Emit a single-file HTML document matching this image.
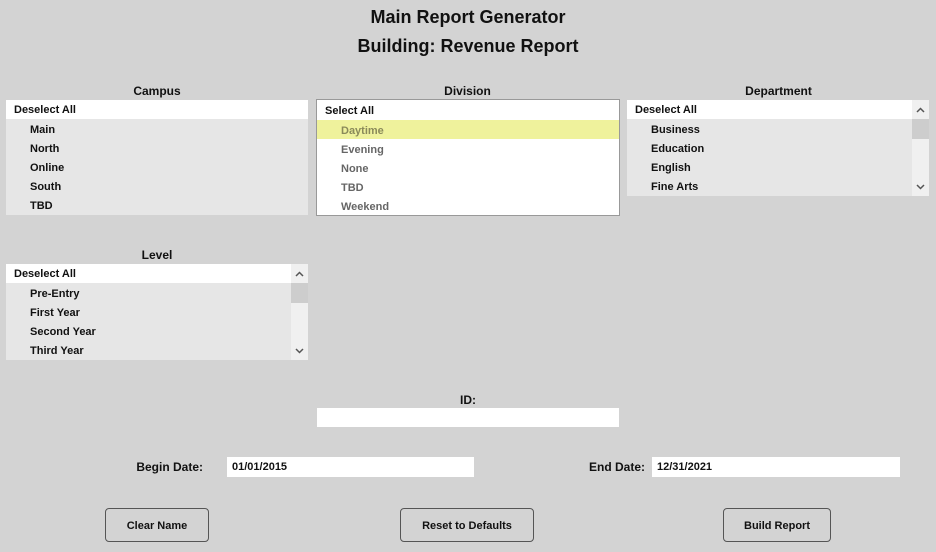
<!DOCTYPE html>
<html><head><style>
body{margin:0;width:936px;height:552px;background:#d3d3d3;font-family:"Liberation Sans",sans-serif;font-weight:bold;color:#111;position:relative;overflow:hidden}
.t{position:absolute;left:0;width:936px;text-align:center;font-size:18px}
.lbl{position:absolute;font-size:12px;text-align:center}
.box{position:absolute;background:#e6e6e6;font-size:11px}
.hd{height:19px;background:#fff;line-height:21px;padding-left:8px;overflow:visible}
.it{height:19px;line-height:23px;padding-left:24px;overflow:visible}
.sb{position:absolute;right:0;top:0;width:17px;bottom:0;background:#f0f0f0}
.th{position:absolute;left:0;width:17px;top:19px;height:20px;background:#cdcdcd}
.ar{position:absolute;left:4px;width:9px;height:6px}
.inp{position:absolute;background:#fff;font-size:11px;line-height:20px;padding-left:5px;box-sizing:border-box}
.btn{position:absolute;border:1px solid #555;border-radius:4px;font-size:11px;text-align:center;box-sizing:border-box;background:#d3d3d3}
</style></head><body>
<div class="t" style="top:7px">Main Report Generator</div>
<div class="t" style="top:36px">Building: Revenue Report</div>

<div class="lbl" style="left:6px;width:302px;top:84px">Campus</div>
<div class="box" style="left:6px;top:100px;width:302px;height:115px">
<div class="hd">Deselect All</div>
<div class="it">Main</div><div class="it">North</div><div class="it">Online</div><div class="it">South</div><div class="it">TBD</div>
</div>

<div class="lbl" style="left:316px;width:303px;top:84px">Division</div>
<div class="box" style="left:316px;top:99px;width:302px;height:115px;background:#fff;border:1px solid #999">
<div class="hd" style="height:20px;line-height:22px">Select All</div>
<div class="it" style="background:#eff29c;color:#8a8a5a">Daytime</div>
<div class="it" style="color:#666">Evening</div><div class="it" style="color:#666">None</div><div class="it" style="color:#666">TBD</div><div class="it" style="color:#666">Weekend</div>
</div>

<div class="lbl" style="left:627px;width:303px;top:84px">Department</div>
<div class="box" style="left:627px;top:100px;width:302px;height:96px">
<div class="hd">Deselect All</div>
<div class="it">Business</div><div class="it">Education</div><div class="it">English</div><div class="it">Fine Arts</div>
<div class="sb"><svg class="ar" style="top:7px" viewBox="0 0 9 6"><path d="M1 5L4.5 1.5L8 5" stroke="#555" stroke-width="1.5" fill="none"/></svg><div class="th"></div><svg class="ar" style="bottom:6px" viewBox="0 0 9 6"><path d="M1 1L4.5 4.5L8 1" stroke="#555" stroke-width="1.5" fill="none"/></svg></div>
</div>

<div class="lbl" style="left:6px;width:302px;top:248px">Level</div>
<div class="box" style="left:6px;top:264px;width:302px;height:96px">
<div class="hd">Deselect All</div>
<div class="it">Pre-Entry</div><div class="it">First Year</div><div class="it">Second Year</div><div class="it">Third Year</div>
<div class="sb"><svg class="ar" style="top:7px" viewBox="0 0 9 6"><path d="M1 5L4.5 1.5L8 5" stroke="#555" stroke-width="1.5" fill="none"/></svg><div class="th"></div><svg class="ar" style="bottom:6px" viewBox="0 0 9 6"><path d="M1 1L4.5 4.5L8 1" stroke="#555" stroke-width="1.5" fill="none"/></svg></div>
</div>

<div class="lbl" style="left:317px;width:302px;top:393px">ID:</div>
<div class="inp" style="left:317px;top:408px;width:302px;height:19px"></div>

<div class="lbl" style="left:118px;width:85px;top:460px;text-align:right">Begin Date:</div>
<div class="inp" style="left:227px;top:457px;width:247px;height:20px;line-height:21px">01/01/2015</div>
<div class="lbl" style="left:568px;width:77px;top:460px;text-align:right">End Date:</div>
<div class="inp" style="left:652px;top:457px;width:248px;height:20px;line-height:21px">12/31/2021</div>

<div class="btn" style="left:105px;top:508px;width:104px;height:34px;line-height:34px">Clear Name</div>
<div class="btn" style="left:400px;top:508px;width:134px;height:34px;line-height:34px">Reset to Defaults</div>
<div class="btn" style="left:723px;top:508px;width:108px;height:34px;line-height:34px">Build Report</div>
</body></html>
